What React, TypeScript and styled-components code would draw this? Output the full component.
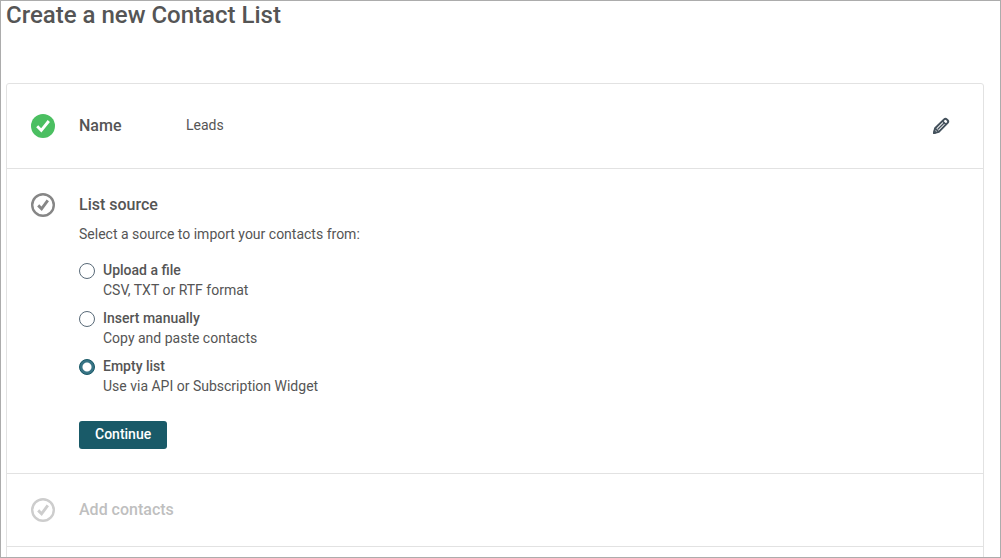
import React, { useState } from "react";
import styled, { createGlobalStyle } from "styled-components";

const GlobalStyle = createGlobalStyle`
  *, *::before, *::after { box-sizing: border-box; }
  body {
    margin: 0;
    background: #fff;
    color: #555;
    font: 400 14px/20px Roboto, "Liberation Sans", sans-serif;
  }
`;

const Frame = styled.main`
  height: 100vh;
  overflow: hidden;
  padding: 0 16px 0 5px;
  border: 1px solid #acacac;
`;

const PageTitle = styled.h1`
  margin: 0 0 54px;
  font-size: 24px;
  line-height: 28px;
  font-weight: 500;
`;

const Card = styled.section`
  border: 1px solid #e2e2e2;
  border-radius: 3px;
`;

const Step = styled.div<{ $tall?: boolean }>`
  display: flex;
  gap: 24px;
  padding: ${(p) => (p.$tall ? "30px" : "24px")} 24px;
  border-bottom: 1px solid #e2e2e2;
`;

const StepBody = styled.div`
  flex: 1;
  min-width: 0;
`;

const StepTitle = styled.h2<{ $muted?: boolean }>`
  margin: 0;
  font-size: 16px;
  line-height: 24px;
  font-weight: 500;
  color: ${(p) => (p.$muted ? "#bfbfbf" : "inherit")};
`;

const SummaryRow = styled.div`
  flex: 1;
  display: grid;
  grid-template-columns: 83px 1fr auto;
  column-gap: 24px;
  align-items: start;
`;

const SummaryValue = styled.span`
  line-height: 22px;
`;

const IconButton = styled.button`
  display: flex;
  align-items: center;
  justify-content: center;
  width: 36px;
  height: 24px;
  padding: 0;
  border: 0;
  background: none;
  color: #44515c;
  cursor: pointer;
`;

const StatusSvg = styled.svg`
  flex: none;
  width: 24px;
  height: 24px;
`;

const SourceForm = styled.form`
  margin-top: 7px;
`;

const Options = styled.fieldset`
  display: grid;
  gap: 8px;
  margin: 0 0 25px;
  padding: 0;
  border: 0;
`;

const Legend = styled.legend`
  padding: 0;
  margin-bottom: 16px;
`;

const Option = styled.label`
  display: flex;
  gap: 8px;
  justify-self: start;
  cursor: pointer;
`;

const Radio = styled.input`
  appearance: none;
  flex: none;
  width: 16px;
  height: 16px;
  margin: 3px 0 0;
  border: 1px solid #596a78;
  border-radius: 50%;
  background: #fff;

  &:checked {
    border-color: #1b5a68;
    background: #387485 radial-gradient(circle, #fff 4px, #387485 5px);
  }
`;

const OptionName = styled.span`
  display: block;
  font-weight: 500;
`;

const OptionHint = styled.span`
  display: block;
`;

const PrimaryButton = styled.button`
  display: block;
  height: 28px;
  padding: 0 16px 2px;
  border: 0;
  border-radius: 3px;
  background: #195a68;
  color: #fff;
  font: inherit;
  font-weight: 500;
  cursor: pointer;
`;

type Status = "done" | "current" | "pending";

function StatusIcon({ status }: { status: Status }) {
  const color = { done: "#4bbf61", current: "#868686", pending: "#cdcdcd" }[status];
  return (
    <StatusSvg viewBox="0 0 24 24" aria-hidden="true">
      {status === "done" ? (
        <>
          <circle cx="12" cy="12" r="12" fill={color} />
          <path d="M6.2 12.2l4.1 4.2L17.8 7" fill="none" stroke="#fff" strokeWidth="2.9" />
        </>
      ) : (
        <>
          <circle cx="12" cy="12" r="10.8" fill="none" stroke={color} strokeWidth="2.4" />
          <path d="M7.2 12.4l3.4 3.4L16.8 7.4" fill="none" stroke={color} strokeWidth="2.9" />
        </>
      )}
    </StatusSvg>
  );
}

function PencilIcon() {
  return (
    <svg width="18" height="18" viewBox="0 0 18 18" fill="none" stroke="currentColor" aria-hidden="true">
      <path
        d="M2 16l1.1-4.8L12.1 2.4a2 2 0 0 1 2.7 0l.8.8a2 2 0 0 1 0 2.7L6.8 14.9z"
        strokeWidth="2"
        strokeLinejoin="round"
      />
      <path d="M10.5 4l3.6 3.6M3.2 11.4l3.5 3.5" strokeWidth="1.5" />
      <path d="M5.6 12.5l6.5-6.5" strokeWidth="1.3" />
      <path d="M1.5 16.5l.7-2.8 2.1 2.1z" fill="currentColor" strokeWidth="1" />
    </svg>
  );
}

const sources = [
  { id: "file", name: "Upload a file", hint: "CSV, TXT or RTF format" },
  { id: "manual", name: "Insert manually", hint: "Copy and paste contacts" },
  { id: "empty", name: "Empty list", hint: "Use via API or Subscription Widget" },
];

export default function App() {
  const [source, setSource] = useState("empty");

  return (
    <>
      <GlobalStyle />
      <Frame>
        <PageTitle>Create a new Contact List</PageTitle>
        <Card>
          <Step $tall>
            <StatusIcon status="done" />
            <SummaryRow>
              <StepTitle>Name</StepTitle>
              <SummaryValue>Leads</SummaryValue>
              <IconButton type="button" aria-label="Edit name">
                <PencilIcon />
              </IconButton>
            </SummaryRow>
          </Step>
          <Step>
            <StatusIcon status="current" />
            <StepBody>
              <StepTitle>List source</StepTitle>
              <SourceForm onSubmit={(e) => e.preventDefault()}>
                <Options>
                  <Legend>Select a source to import your contacts from:</Legend>
                  {sources.map((s) => (
                    <Option key={s.id}>
                      <Radio
                        type="radio"
                        name="source"
                        value={s.id}
                        checked={source === s.id}
                        onChange={() => setSource(s.id)}
                      />
                      <span>
                        <OptionName>{s.name}</OptionName>
                        <OptionHint>{s.hint}</OptionHint>
                      </span>
                    </Option>
                  ))}
                </Options>
                <PrimaryButton type="submit">Continue</PrimaryButton>
              </SourceForm>
            </StepBody>
          </Step>
          <Step>
            <StatusIcon status="pending" />
            <StepTitle $muted>Add contacts</StepTitle>
          </Step>
          <Step />
        </Card>
      </Frame>
    </>
  );
}
